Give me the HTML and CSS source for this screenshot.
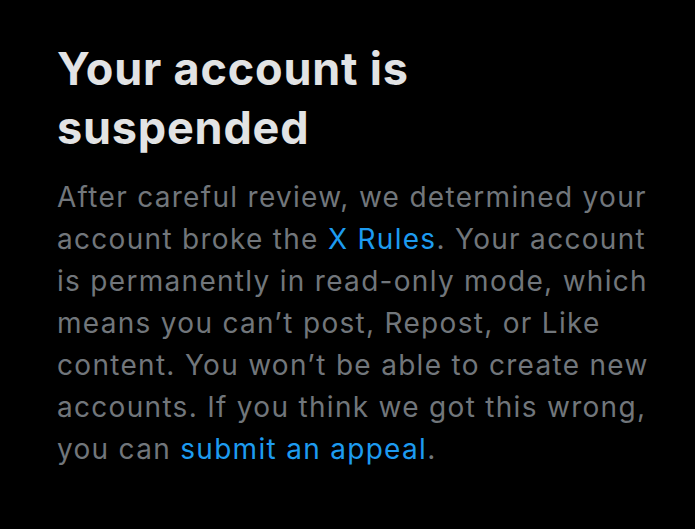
FILE: index.html
```html
<!DOCTYPE html>
<html lang="en">
<head>
<meta charset="utf-8">
<link rel="stylesheet" href="styles.css">
</head>
<body>
<main class="notice">
  <h1 class="notice-title">Your account is suspended</h1>
  <p class="notice-body">After careful review, we determined your account broke the <a class="notice-link" href="#">X Rules</a>. Your account is permanently in read-only mode, which means you can’t post, Repost, or Like content. You won’t be able to create new accounts. If you think we got this wrong, you can <a class="notice-link" href="#">submit an appeal</a>.</p>
</main>
</body>
</html>
```
FILE: styles.css
```css
html, body {
  margin: 0;
  padding: 0;
  background: #000;
}
body {
  width: 695px;
  height: 529px;
  overflow: hidden;
  font-family: Inter, "Noto Sans", sans-serif;
}
.notice {
  padding: 39px 30px 0 57px;
}
.notice-title {
  margin: 0;
  font-size: 45px;
  line-height: 59px;
  font-weight: 700;
  letter-spacing: 0.8px;
  color: #e2e3e4;
  width: 400px;
}
.notice-body {
  margin: 19px 0 0;
  font-size: 28px;
  line-height: 42px;
  letter-spacing: 1.3px;
  color: #71767b;
  width: 612px;
}
.notice-link {
  color: #1d9bf0;
  text-decoration: none;
}
```
